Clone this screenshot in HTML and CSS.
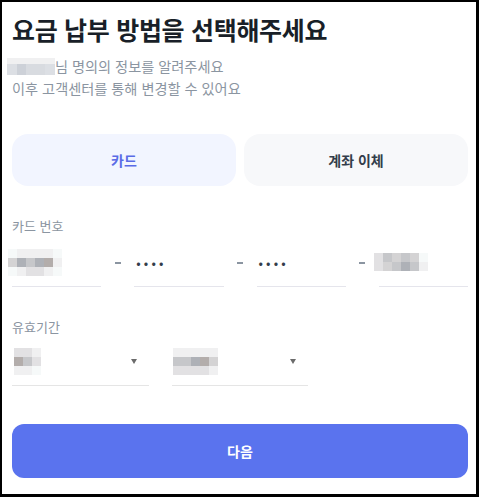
FILE: index.html
```html
<!DOCTYPE html>
<html lang="ko">
<head>
  <meta charset="UTF-8">
  <title>요금 납부 방법 선택</title>
  <meta name="viewport" content="width=device-width, initial-scale=1.0">
  <link rel="stylesheet" href="styles.css">
</head>
<body>
  <div class="frame">
    <h1>요금 납부 방법을 선택해주세요</h1>
    <p class="desc">
      <span class="mosaic name">
        <i class="s1"></i><i class="s1"></i><i class="s1"></i><i class="s1"></i><i class="s1"></i>
        <i class="s2"></i><i class="s4"></i><i class="s3"></i><i class="s3"></i><i class="s2"></i>
      </span>님 명의의 정보를 알려주세요<br>
      이후 고객센터를 통해 변경할 수 있어요
    </p>

    <div class="tabs">
      <button class="tab active">카드</button>
      <button class="tab">계좌 이체</button>
    </div>

    <div class="field">
      <div class="label">카드 번호</div>
      <div class="card-row">
        <div class="cell">
          <span class="mosaic num6">
            <i class="s0"></i><i class="s1"></i><i class="s1"></i><i class="s1"></i><i class="s1"></i><i class="s0"></i>
            <i class="s3"></i><i class="s5"></i><i class="s4"></i><i class="s5"></i><i class="s6"></i><i class="s1"></i>
            <i class="s0"></i><i class="s1"></i><i class="s2"></i><i class="s2"></i><i class="s1"></i><i class="s0"></i>
          </span>
        </div>
        <span class="dash"></span>
        <div class="cell"><span class="dots">••••</span></div>
        <span class="dash"></span>
        <div class="cell"><span class="dots">••••</span></div>
        <span class="dash"></span>
        <div class="cell">
          <span class="mosaic num2">
            <i class="s2"></i><i class="s4"></i><i class="s3"></i><i class="s4"></i><i class="s3"></i><i class="s0"></i>
            <i class="s2"></i><i class="s3"></i><i class="s4"></i><i class="s5"></i><i class="s4"></i><i class="s1"></i>
          </span>
        </div>
      </div>
    </div>

    <div class="field">
      <div class="label">유효기간</div>
      <div class="expiry-row">
        <div class="select">
          <span class="mosaic sel3">
            <i class="s2"></i><i class="s2"></i><i class="s1"></i>
            <i class="s6"></i><i class="s4"></i><i class="s2"></i>
            <i class="s1"></i><i class="s1"></i><i class="s0"></i>
          </span>
          <span class="arrow"></span>
        </div>
        <div class="select">
          <span class="mosaic sel5">
            <i class="s1"></i><i class="s1"></i><i class="s1"></i><i class="s1"></i><i class="s1"></i>
            <i class="s4"></i><i class="s4"></i><i class="s5"></i><i class="s6"></i><i class="s3"></i>
            <i class="s2"></i><i class="s2"></i><i class="s2"></i><i class="s2"></i><i class="s1"></i>
          </span>
          <span class="arrow"></span>
        </div>
      </div>
    </div>

    <button class="next">다음</button>
  </div>
</body>
</html>
```

FILE: styles.css
```css
* {
  box-sizing: border-box;
}

body {
  margin: 0;
  font-family: "Noto Sans CJK KR", "Noto Sans", sans-serif;
  background: #ffffff;
  color: #191f28;
}

.frame {
  width: 479px;
  height: 497px;
  border: solid #000;
  border-width: 2px 3px 3px 2px;
  padding: 10px 8px 0 10px;
}

h1 {
  margin: 0;
  font-size: 25px;
  line-height: 34px;
  font-weight: 700;
  letter-spacing: -0.3px;
  color: #191f28;
}

.desc {
  margin: 9px 0 0;
  font-size: 14.2px;
  line-height: 22px;
  color: #8b95a1;
}

.tabs {
  display: grid;
  grid-template-columns: 1fr 1fr;
  gap: 8px;
  margin-top: 35px;
}

.tab {
  height: 52px;
  border: none;
  border-radius: 16px;
  background: #f7f8fa;
  color: #333d4b;
  font-family: inherit;
  font-size: 14px;
  font-weight: 700;
}

.tab.active {
  background: #f2f5ff;
  color: #5a6be6;
}

.field {
  margin-top: 30px;
}

.label {
  font-size: 13px;
  line-height: 20px;
  color: #8b95a1;
}

.card-row {
  display: flex;
  align-items: center;
  margin-top: 2px;
}

.cell {
  flex: 1;
  height: 49px;
  border-bottom: 1px solid #e5e5ec;
  display: flex;
  align-items: center;
}

.dash {
  width: 33px;
  display: flex;
  justify-content: center;
}

.dash::before {
  content: "";
  width: 6px;
  height: 2px;
  background: #8b95a1;
}

.dots {
  font-size: 13px;
  letter-spacing: 3.2px;
  color: #333d4b;
  padding-left: 2px;
}

.expiry-row {
  display: flex;
  gap: 23px;
}

.select {
  width: 137px;
  height: 49px;
  border-bottom: 1px solid #e5e5e5;
  display: flex;
  align-items: center;
  justify-content: space-between;
  padding-right: 12px;
}

.select + .select {
  width: 136px;
  padding-left: 1px;
}

.arrow {
  width: 0;
  height: 0;
  border-left: 3px solid transparent;
  border-right: 3px solid transparent;
  border-top: 5px solid #6b6b6b;
}

.mosaic {
  display: inline-grid;
  grid-auto-rows: 9px;
  vertical-align: middle;
}

.mosaic i {
  display: block;
}

.mosaic.name {
  grid-template-columns: repeat(5, 9.6px);
  grid-template-rows: 6px 11px;
  margin: 3px 0 0 -5px;
  vertical-align: top;
}

.num6 {
  grid-template-columns: repeat(6, 9px);
  margin-left: -4px;
}

.num2 {
  grid-template-columns: repeat(6, 9px);
  margin-left: -5px;
}

.sel3 {
  grid-template-columns: repeat(3, 9px);
  margin-left: 2px;
}

.sel5 {
  grid-template-columns: repeat(5, 9px);
}

.s0 { background: #f6f9f9; }
.s1 { background: #f0f0f1; }
.s2 { background: #e2e1e3; }
.s3 { background: #d4d3d4; }
.s4 { background: #c6c7ca; }
.s5 { background: #aeb1b7; }
.s6 { background: #b3adab; }

.name .s2 { background: #dcdfe4; }
.name .s3 { background: #d8dbe0; }
.name .s4 { background: #cdd1d8; }

.next {
  display: block;
  width: 100%;
  height: 54px;
  margin-top: 38px;
  border: none;
  border-radius: 12px;
  background: #5a73ee;
  color: #ffffff;
  font-family: inherit;
  font-size: 14px;
  font-weight: 700;
}
```
